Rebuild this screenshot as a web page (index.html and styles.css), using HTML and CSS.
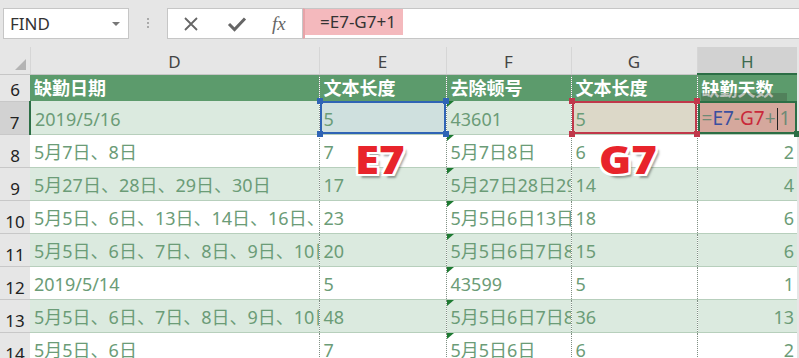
FILE: index.html
```html
<!DOCTYPE html>
<html lang="zh-CN">
<head>
    <meta charset="UTF-8">
    <title>缺勤天数</title>
    <link rel="stylesheet" href="styles.css">
</head>
<body>

    <div class="bar">
        <div class="namebox">
            <span>FIND</span>
            <span class="drop"></span>
        </div>
        <div class="grip"></div>
        <div class="btns">
            <svg class="ic-x" width="16" height="16" viewBox="0 0 16 16"><path d="M2 2 L14 14 M14 2 L2 14" stroke="#666" stroke-width="1.8" fill="none"/></svg>
            <svg class="ic-ok" width="20" height="16" viewBox="0 0 20 16"><path d="M2 8 L7.5 13.5 L18 2.5" stroke="#666" stroke-width="3" fill="none"/></svg>
            <span class="fx">fx</span>
        </div>
        <div class="input">
            <span class="formula">=E7-G7+1</span>
        </div>
    </div>

    <table class="sheet">
        <colgroup>
            <col class="c-rh"><col class="c-d"><col class="c-e"><col class="c-f"><col class="c-g"><col class="c-h">
        </colgroup>
        <tr class="colhead">
            <th class="corner"><span class="tri-corner"></span></th>
            <th>D</th><th>E</th><th>F</th><th>G</th><th class="on">H</th>
        </tr>
        <tr class="title">
            <th class="rh">6</th>
            <td>缺勤日期</td><td class="dot">文本长度</td><td class="dot">去除顿号</td><td class="dot">文本长度</td><td class="dot">缺勤天数</td>
        </tr>
        <tr class="g">
            <th class="rh on">7</th>
            <td>2019/5/16</td>
            <td class="dot sel-e">5<i class="h tl"></i><i class="h bl"></i><i class="h tr"></i><i class="h br"></i></td>
            <td class="dot tri">43601</td>
            <td class="dot sel-g">5<i class="h tl"></i><i class="h bl"></i><i class="h tr"></i><i class="h br"></i></td>
            <td class="dot sel-h"><span class="shade"></span><span class="edit"><b class="op">=</b><b class="re">E7</b><b class="op">-</b><b class="rg">G7</b><b class="op">+</b><b class="caret"></b><b class="op">1</b></span><i class="h br"></i></td>
        </tr>
        <tr>
            <th class="rh">8</th>
            <td>5月7日、8日</td><td class="dot">7<span class="tag tag-e">E7</span></td><td class="dot tri">5月7日8日</td><td class="dot">6<span class="tag tag-g">G7</span></td><td class="dot num">2</td>
        </tr>
        <tr class="g">
            <th class="rh">9</th>
            <td>5月27日、28日、29日、30日</td><td class="dot">17</td><td class="dot tri">5月27日28日29日30日</td><td class="dot">14</td><td class="dot num">4</td>
        </tr>
        <tr>
            <th class="rh">10</th>
            <td>5月5日、6日、13日、14日、16日、17日</td><td class="dot">23</td><td class="dot tri">5月5日6日13日14日16日</td><td class="dot">18</td><td class="dot num">6</td>
        </tr>
        <tr class="g">
            <th class="rh">11</th>
            <td>5月5日、6日、7日、8日、9日、10日</td><td class="dot">20</td><td class="dot tri">5月5日6日7日8日9日</td><td class="dot">15</td><td class="dot num">6</td>
        </tr>
        <tr>
            <th class="rh">12</th>
            <td>2019/5/14</td><td class="dot">5</td><td class="dot tri">43599</td><td class="dot">5</td><td class="dot num">1</td>
        </tr>
        <tr class="g">
            <th class="rh">13</th>
            <td>5月5日、6日、7日、8日、9日、10日、11日</td><td class="dot">48</td><td class="dot tri">5月5日6日7日8日9日</td><td class="dot">36</td><td class="dot num">13</td>
        </tr>
        <tr>
            <th class="rh">14</th>
            <td>5月5日、6日</td><td class="dot">7</td><td class="dot tri">5月5日6日</td><td class="dot">6</td><td class="dot num">2</td>
        </tr>
    </table>

</body>
</html>
```

FILE: styles.css
```css
body {
    margin: 0;
    width: 799px;
    height: 358px;
    overflow: hidden;
    background-color: #e6e6e6;
    font-family: "Noto Sans", "Noto Sans CJK SC", sans-serif;
}

/* formula bar */
.bar {
    display: flex;
    align-items: center;
    height: 31px;
    padding: 8px 0 8px 3px;
}
.namebox {
    width: 126px;
    height: 31px;
    box-sizing: border-box;
    background: #fff;
    border: 1px solid #c6c6c6;
    display: flex;
    align-items: center;
    justify-content: space-between;
    padding: 0 8px 0 6px;
    font-size: 17px;
    color: #333;
}
.drop {
    width: 0;
    height: 0;
    border-left: 4px solid transparent;
    border-right: 4px solid transparent;
    border-top: 4px solid #777;
}
.grip {
    width: 2px;
    height: 12px;
    margin: 0 18px 0 18px;
    background: repeating-linear-gradient(#aaa 0 2px, transparent 2px 4px);
}
.btns {
    width: 136px;
    height: 31px;
    box-sizing: border-box;
    background: #fff;
    border: 1px solid #c6c6c6;
    display: flex;
    align-items: center;
    padding-left: 15px;
}
.ic-ok {
    margin-left: 28px;
}
.fx {
    margin-left: 25px;
    font-family: "Liberation Serif", serif;
    font-style: italic;
    font-size: 19px;
    color: #666;
}
.input {
    flex: 1;
    height: 31px;
    box-sizing: border-box;
    background: #fff;
    border-top: 1px solid #c6c6c6;
    border-bottom: 1px solid #c6c6c6;
    border-left: 2px solid #e8a3a8;
    display: flex;
    align-items: flex-start;
}
.formula {
    background: #f4b9bd;
    height: 26px;
    line-height: 26px;
    padding: 0 7px 0 15px;
    font-size: 17px;
    color: #333;
}

/* sheet */
.sheet {
    border-collapse: collapse;
    table-layout: fixed;
    width: 797px;
    background: #fff;
}
.c-rh { width: 30px; }
.c-d { width: 289px; }
.c-e { width: 127px; }
.c-f { width: 125px; }
.c-g { width: 126px; }
.c-h { width: 100px; }

.sheet td, .sheet th {
    box-sizing: border-box;
    padding: 0 4px;
    line-height: 20px;
    white-space: nowrap;
    overflow: hidden;
    position: relative;
}
.colhead th {
    height: 27px;
    background: #e6e6e6;
    border-left: 1px solid #d6d6d6;
    border-bottom: 1px solid #c6c6c6;
    font-weight: normal;
    font-size: 17px;
    color: #444;
    padding-top: 3px;
}
.colhead th.on {
    background: #d2d2d2;
    border-bottom: 2px solid #2c6e45;
    color: #3d6a4e;
}
.corner {
    border-left: none !important;
}
.tri-corner {
    position: absolute;
    right: 4px;
    bottom: 4px;
    width: 0;
    height: 0;
    border-left: 11px solid transparent;
    border-bottom: 11px solid #b4b4b4;
}
.rh {
    background: #e6e6e6;
    border-bottom: 1px solid #c8c8c8;
    font-weight: normal;
    font-size: 17px;
    color: #222;
    text-align: center;
    vertical-align: bottom;
    padding: 0 0 1px 0 !important;
}
.rh.on {
    background: #d2d2d2;
    border-right: 2px solid #2c6e45;
}

.title td {
    height: 27px;
    background: #5c9b6c;
    color: #fff;
    font-weight: bold;
    font-size: 18px;
    padding-top: 1px;
}
.title td.dot {
    border-left: 1px dotted #eef5ef;
}

.sheet tr:not(.colhead):not(.title) td {
    height: 33px;
    font-size: 18px;
    color: #6b9c77;
    border-bottom: 1px solid #b7cfbc;
    padding-top: 3px;
    text-overflow: clip;
}
.sheet tr:not(.colhead):not(.title) th {
    height: 33px;
}
.sheet tr.g td {
    background: #dbeadf;
}
.sheet td.dot {
    border-left: 1px dotted #7f8f83;
}
.sheet td.num {
    text-align: right;
    padding-right: 3px;
}

/* error indicator */
.tri::before {
    content: "";
    position: absolute;
    left: 0;
    top: 0;
    border-top: 6px solid #1e7a32;
    border-right: 7px solid transparent;
}

/* selections */
.sheet tr.g td.sel-e {
    background: #cfe0de;
    box-shadow: inset 0 0 0 2px #2f64b5;
    overflow: visible;
}
.sheet tr.g td.sel-g {
    background: #dcd8c8;
    box-shadow: inset 0 0 0 2px #c0384a;
    overflow: visible;
}
.sheet tr.g td.sel-h {
    background: #d5a89d;
    box-shadow: inset 0 0 0 2px #2c6e45;
    overflow: visible;
    padding-left: 4px;
    font-size: 19px;
}
.h {
    position: absolute;
    width: 6px;
    height: 6px;
    z-index: 2;
}
.sel-e .h { background: #2f64b5; }
.sel-g .h { background: #c0384a; }
.sel-h .h { background: #2c6e45; }
.h.tl { left: -3px; top: -3px; }
.h.tr { right: -3px; top: -3px; }
.h.bl { left: -3px; bottom: -3px; }
.h.br { right: -3px; bottom: -3px; }

.shade {
    position: absolute;
    left: 3px;
    right: 10px;
    top: -8px;
    height: 8px;
    background: rgba(60, 80, 60, 0.35);
}
.edit b {
    font-weight: normal;
}
.edit .op { color: #6e8a76; }
.edit .re { color: #3a4fa0; }
.edit .rg { color: #c9283a; }
.edit .caret {
    display: inline-block;
    width: 1px;
    height: 22px;
    background: #222;
    vertical-align: -5px;
    margin: 0 2px 0 1px;
}

/* callout labels */
.sheet td .tag {
    position: absolute;
    top: 4px;
    font-family: "Noto Sans", sans-serif;
    font-weight: 900;
    font-size: 39px;
    line-height: 1;
    color: #e8242b;
    z-index: 3;
    transform: scaleX(1.12);
    transform-origin: left top;
    text-shadow: -2px 0 #fff, 2px 0 #fff, 0 -2px #fff, 0 2px #fff,
                 -2px -2px #fff, 2px 2px #fff, -2px 2px #fff, 2px -2px #fff,
                 3px 4px 2px rgba(0, 0, 0, 0.35);
}
.sheet td .tag-e { left: 35px; }
.sheet td .tag-g { left: 27px; }
.sheet tr td:has(.tag) { overflow: visible; }
```
